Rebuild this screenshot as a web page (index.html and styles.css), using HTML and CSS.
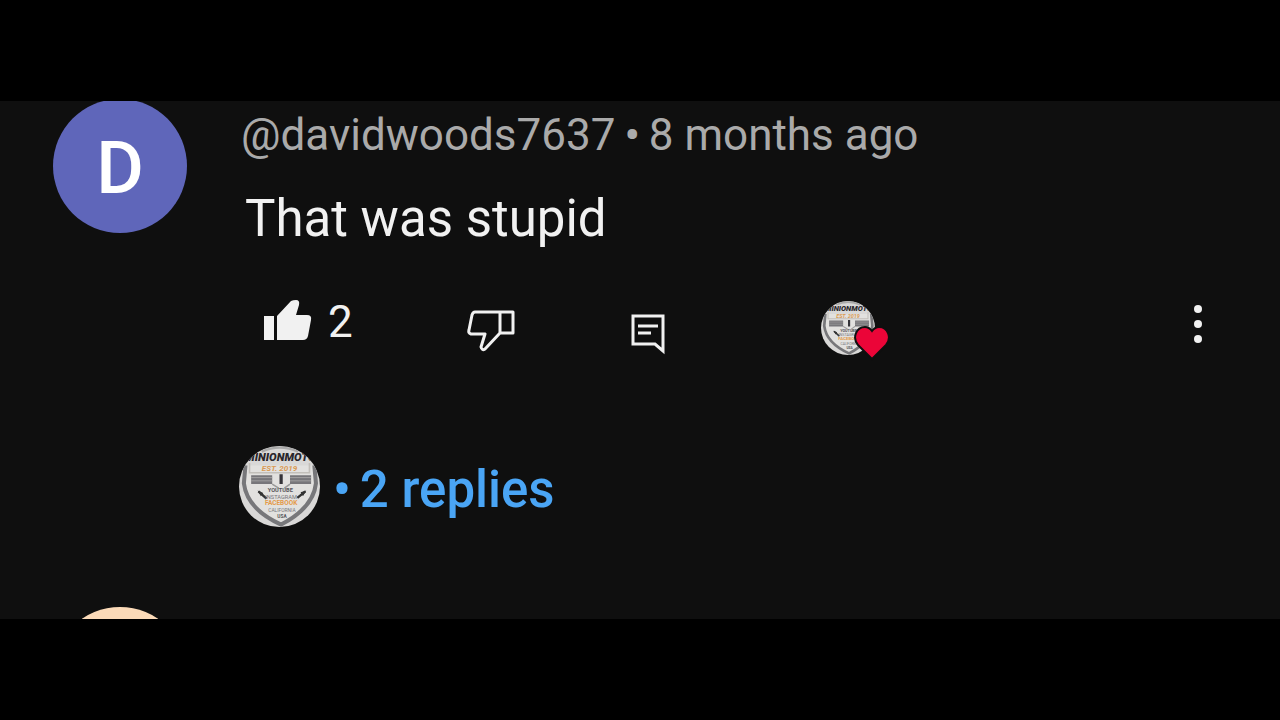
FILE: index.html
```
<!DOCTYPE html>
<html lang="en">
  <head>
    <meta charset="UTF-8" />
    <meta name="viewport" content="width=device-width, initial-scale=1.0" />
    <title>Comments</title>
    <link rel="stylesheet" href="styles.css">
  </head>
  <body>
    <!-- Channel logo, used by the heart badge and the replies link -->
    <svg class="defs" width="0" height="0" aria-hidden="true">
      <defs>
        <clipPath id="round"><circle cx="50" cy="50" r="50" /></clipPath>
        <symbol id="channel" viewBox="0 0 100 100">
          <g clip-path="url(#round)">
            <rect width="100" height="100" fill="#d9d8d7" />
            <path d="M8 24 L6 46 Q10 78 52 97 Q92 76 95 46 L93 24" fill="#e2e1df" stroke="#77777a" stroke-width="5" />
            <path d="M28 7 Q50 -3 73 7" fill="none" stroke="#aaa" stroke-width="3" />
            <path d="M13 21 V33 H87 V21" fill="none" stroke="#c2bfba" stroke-width="2" />
            <path d="M15 36 H41 V47 H15 Z M63 36 H89 V47 H63 Z" fill="#77767a" />
            <path d="M15 39 H41 M15 43 H41 M63 39 H89 M63 43 H89" stroke="#aaa8a8" stroke-width="1" />
            <path d="M41 47 L49 52 M63 47 L56 52" stroke="#999" stroke-width="2" />
            <path d="M52 35 V47" stroke="#343338" stroke-width="4" />
            <path d="M24 56 L34 65 M82 56 L72 64" stroke="#333" stroke-width="3" />
            <path d="M23 55 L30 58 L27 62 Z M83 55 L76 57 L79 62 Z" fill="#333" />
            <g text-anchor="middle" font-family="Roboto, sans-serif" font-weight="700">
              <text x="51" y="19" font-size="14" font-style="italic" font-weight="900" fill="#29262b">MINIONMOTO</text>
              <text x="50" y="31" font-size="10" font-style="italic" fill="#d99a54">EST. 2019</text>
              <text x="51" y="57" font-size="7" fill="#55545a">YOUTUBE</text>
              <text x="52" y="65" font-size="7" font-weight="400" fill="#77767a">INSTAGRAM</text>
              <text x="52" y="73" font-size="8" fill="#e49a49">FACEBOOK</text>
              <text x="53" y="82" font-size="6" font-weight="400" fill="#77767a">CALIFORNIA</text>
              <text x="53" y="89" font-size="6" fill="#55545a">USA</text>
            </g>
          </g>
        </symbol>
      </defs>
    </svg>

    <main class="comments">
      <article class="comment">
        <div class="avatar">D</div>
        <div class="content">
          <div class="meta">
            <span>@davidwoods7637</span>
            <span class="dot">•</span>
            <span>8 months ago</span>
          </div>
          <p class="text">That was stupid</p>
          <div class="actions">
            <button class="action like" aria-label="Like">
              <svg width="48" height="42" viewBox="0 1 48 42" fill="#f1f1f1">
                <path d="M0 17 H10 V41 H0 Z" />
                <path d="M13 17 L27 2 Q29 1 32 1 Q36 1 35 6 L32 16 H43 Q48 16 47 21 L44 37 Q43 41 39 41 H13 Z" />
              </svg>
              <span class="count">2</span>
            </button>
            <button class="action" aria-label="Dislike">
              <svg width="48" height="48" viewBox="0 0 48 48" fill="none" stroke="#f1f1f1" stroke-width="3" stroke-linejoin="round">
                <path d="M8 8 H46 V29 H33 L18 45 Q15 47 14 43 L18 30 H4 Q1 29 2 26 L5 11 Q6 8 8 8 Z M33 8 V29" />
              </svg>
            </button>
            <button class="action" aria-label="Reply">
              <svg width="36" height="54" viewBox="1 0 36 54" fill="none" stroke="#f1f1f1" stroke-width="3">
                <path d="M3 15 H33 V50 L25 43 H3 Z M8 25 H28 M8 32 H21" />
              </svg>
            </button>
            <div class="hearted">
              <svg width="54" height="54" role="img" aria-label="Channel"><use href="#channel" /></svg>
              <svg class="heart" width="38" height="38" viewBox="0 0 38 38">
                <path d="M19 35 L5 21 C-1 14 3 3 12 3 Q16 3 19 7 Q22 3 26 3 C35 3 39 14 33 21 Z" fill="#eb0538" stroke="#0f0f0f" stroke-width="2" />
              </svg>
            </div>
            <button class="action menu" aria-label="More actions">
              <svg width="10" height="40" viewBox="0 0 10 40" fill="#f1f1f1">
                <circle cx="5" cy="5" r="4" />
                <circle cx="5" cy="20" r="4" />
                <circle cx="5" cy="35" r="4" />
              </svg>
            </button>
          </div>
          <a class="replies" href="#replies">
            <svg width="81" height="81" aria-hidden="true"><use href="#channel" /></svg>
            <span class="dot">•</span>
            <span>2 replies</span>
          </a>
        </div>
      </article>
      <article class="comment">
        <div class="avatar peach"></div>
      </article>
    </main>
  </body>
</html>
```

FILE: styles.css
```
* {
  box-sizing: border-box;
}
body {
  margin: 0;
  padding: 101px 0;
  height: 100vh;
  background-color: #000;
  color: #f1f1f1;
  font-family: Roboto, sans-serif;
}
.defs {
  position: absolute;
}
.comments {
  height: 100%;
  overflow: hidden;
  background-color: #0f0f0f;
}
.comment {
  display: flex;
  gap: 54px;
  padding: 0 77px 0 53px;
  margin-bottom: 80px;
}
.avatar {
  display: flex;
  flex-shrink: 0;
  align-items: center;
  justify-content: center;
  width: 134px;
  height: 134px;
  margin-top: -2px;
  padding-top: 4px;
  border-radius: 50%;
  background-color: #5f66ba;
  color: #fff;
  font-size: 73px;
  font-weight: 500;
}
.avatar.peach {
  margin-top: 0;
  background-color: #fbdab8;
}
.content {
  flex: 1;
}
.meta {
  display: flex;
  gap: 9px;
  margin-top: 8px;
  color: #aaa;
  font-size: 44px;
  line-height: 52px;
}
.meta .dot {
  font-weight: 500;
}
.text {
  margin: 28px 0 0 4px;
  font-size: 51px;
  line-height: 60px;
}
.actions {
  display: grid;
  grid-template-columns: 203px 164px 190px 1fr auto;
  align-items: center;
  height: 66px;
  margin: 46px 0 0 23px;
}
.action {
  display: flex;
  align-items: center;
  padding: 0;
  border: none;
  background: none;
  color: #f1f1f1;
  font: inherit;
  cursor: pointer;
}
.like {
  align-self: start;
  gap: 16px;
  font-size: 44px;
  line-height: 50px;
}
.count {
  padding-top: 2px;
}
.menu {
  align-self: start;
  padding-top: 9px;
}
.hearted {
  position: relative;
  width: 54px;
  height: 54px;
}
.heart {
  position: absolute;
  left: 32px;
  top: 23px;
}
.replies {
  display: flex;
  align-items: center;
  gap: 9px;
  width: fit-content;
  margin: 85px 0 0 -2px;
  color: #4aa5f5;
  font-size: 51px;
  font-weight: 500;
  line-height: 60px;
  text-decoration: none;
}
.replies span {
  padding-top: 6px;
}
.replies .dot {
  margin-left: 4px;
}
```
